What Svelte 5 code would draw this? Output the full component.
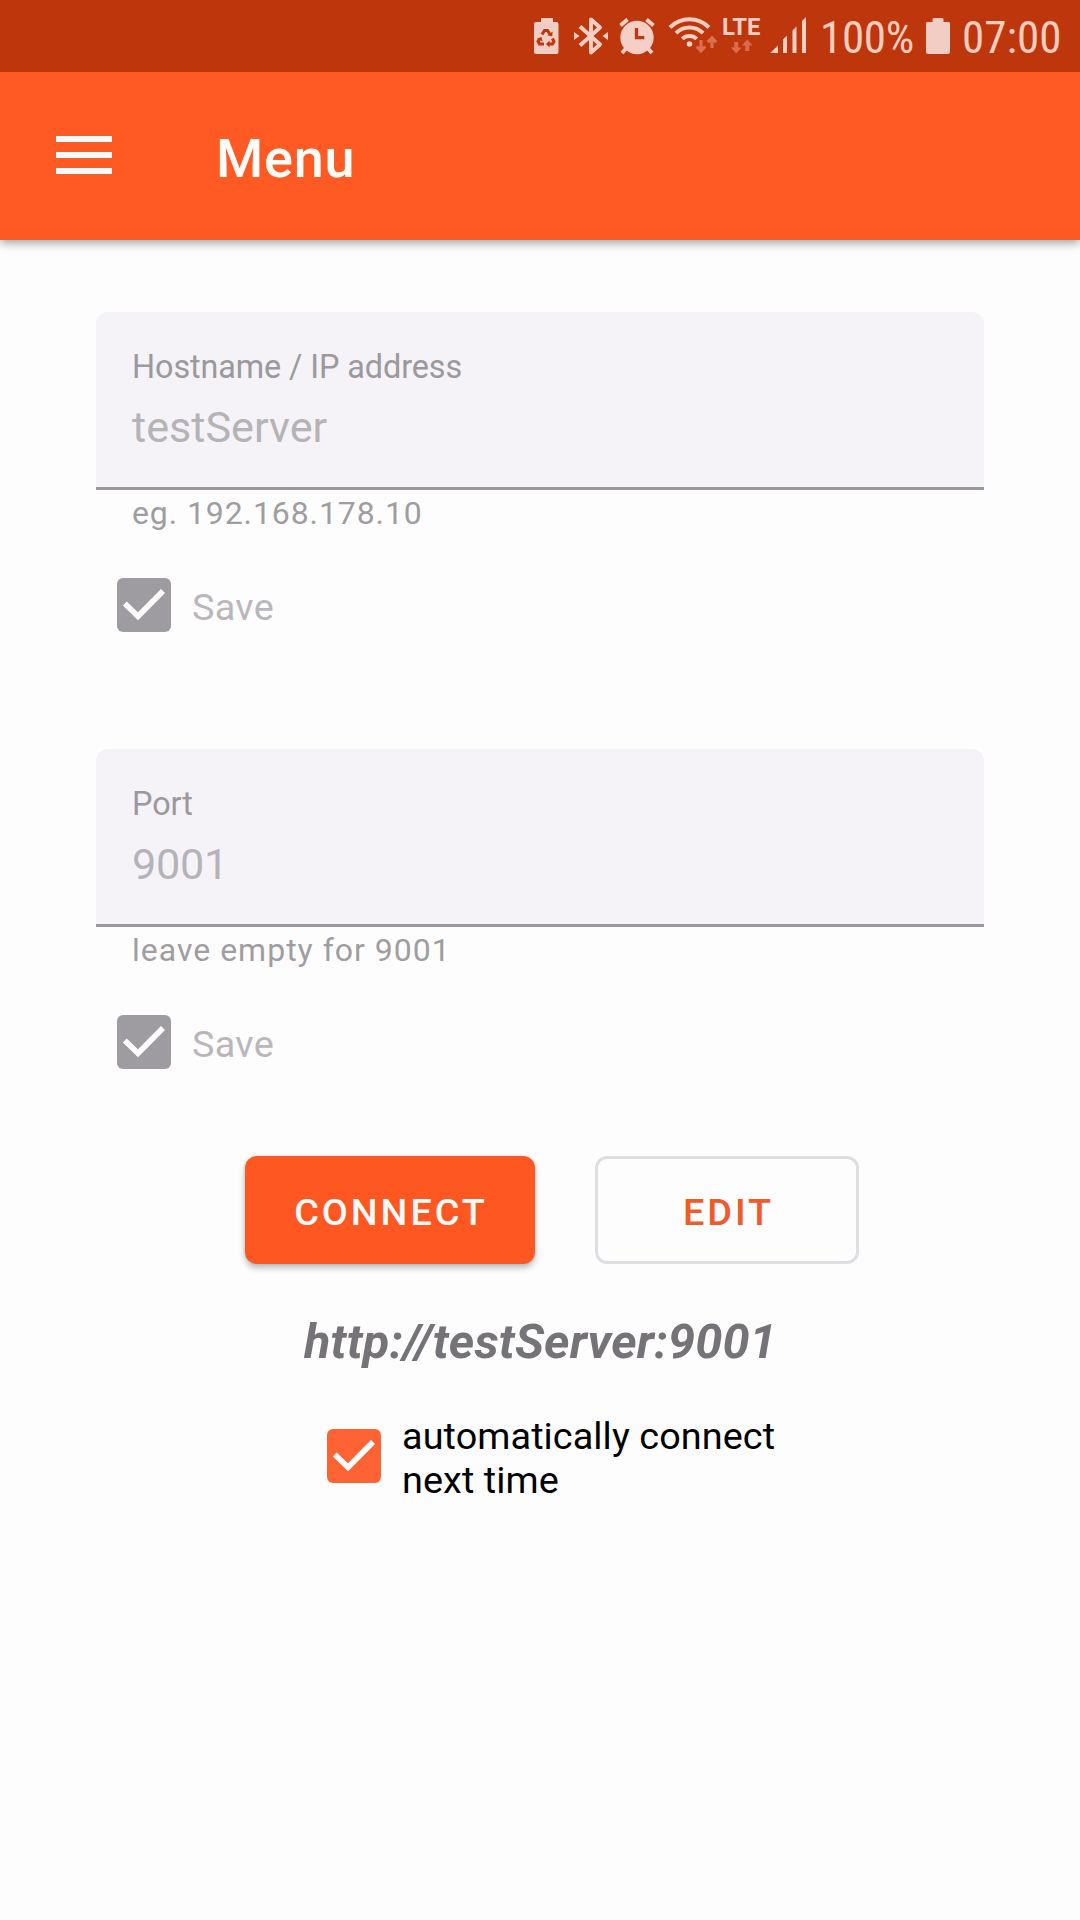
<script>
  let fields = $state([
    { id: 'host', label: 'Hostname / IP address', value: 'testServer', hint: 'eg. 192.168.178.10' },
    { id: 'port', label: 'Port', value: '9001', hint: 'leave empty for 9001' }
  ]);
</script>

{#snippet tick()}
  <svg class="tick" viewBox="0 0 54 54"><path d="M7.800 25.500 21 38.300 46 13" fill="none" stroke="#fff" stroke-width="5.600" /></svg>
{/snippet}

<div class="screen">
  <div class="status">
    <!-- battery saver -->
    <svg width="38" height="72" viewBox="530 0 38 72">
      <path d="M541 18h12v4h3.500a2 2 0 0 1 2 2v28a2 2 0 0 1-2 2h-20.500a2 2 0 0 1-2-2v-28a2 2 0 0 1 2-2h5z" fill="#f2cdc4" />
      <g fill="none" stroke="#bd360c" stroke-width="3">
        <path d="M542 34.500l2.500-4h3l2.500 4" />
        <path d="M552.300 38.500l1.700 3-1.500 2.500h-3.500" />
        <path d="M544 44h-4.500l-1.500-2.500 1.500-2.800" />
      </g>
      <path d="M547.500 35.500l4.800.8.300-4.800zM549.500 40.500v7l-3.500-3.500zM537 38.500l4.500-1.500 1.200 4.500z" fill="#bd360c" />
    </svg>
    <!-- bluetooth -->
    <svg width="46" height="72" viewBox="568 0 46 72">
      <path d="M580 26.500L600 44.500 591 52.500V19.500L600 27.500 580 45.500" fill="none" stroke="#f9cfc4" stroke-width="3.900" stroke-linejoin="round" />
      <path d="M574 32l5.500 4-5.500 4zM608 32l-5.500 4 5.500 4z" fill="#f9cfc4" />
    </svg>
    <!-- alarm -->
    <svg width="48" height="72" viewBox="614 0 48 72">
      <circle cx="637" cy="37.500" r="16.700" fill="#f5cfc6" />
      <path d="M620.500 25.500l7-6M653.500 25.500l-7-6M626 48.500l-4 4.500M648 48.500l4 4.500" stroke="#f5cfc6" stroke-width="3.900" fill="none" />
      <path d="M636.500 28v9.700h7.800" stroke="#bd360c" stroke-width="3.300" fill="none" />
    </svg>
    <!-- wifi -->
    <svg width="58" height="72" viewBox="662 0 58 72">
      <g fill="none" stroke="#f9cfc4" stroke-width="3.900">
        <path d="M670 27.300a27.500 27.500 0 0 1 39 0" />
        <path d="M676 33.200a19 19 0 0 1 27 0" />
        <path d="M682.300 38.800a10.500 10.500 0 0 1 14.400 0" />
      </g>
      <circle cx="689.500" cy="44" r="2.800" fill="#f9cfc4" />
      <path d="M701 40v11M696.800 46.500l4.200 4.500 4.200-4.500M712 48V38M707.800 42.200l4.200-4.400 4.200 4.400" fill="none" stroke="#da7050" stroke-width="3.200" />
    </svg>
    <!-- LTE -->
    <svg width="46" height="72" viewBox="720 0 46 72">
      <text class="lte" x="722" y="35" textLength="38.500" lengthAdjust="spacingAndGlyphs">LTE</text>
      <path d="M734.200 42h4v5.500h3.300l-5.300 6-5.300-6h3.300zM745.200 51h4v-5.500h3.300l-5.300-6-5.300 6h3.300z" fill="#da6c4d" />
    </svg>
    <!-- signal -->
    <svg width="54" height="72" viewBox="766 0 54 72">
      <path d="M770 53l8-7.500v7.500zM783 53V39.500l4-4V53zM792.500 53V30.500l4-4V53zM802 53V21l4-4V53z" fill="#f9cfc4" />
    </svg>
    <span class="percent">100%</span>
    <!-- battery -->
    <svg width="44" height="72" viewBox="918 0 44 72">
      <path d="M934 18h8a1.500 1.500 0 0 1 1.500 1.500v2.500h5a1.500 1.500 0 0 1 1.500 1.500v28.500a2 2 0 0 1-2 2h-20a2 2 0 0 1-2-2v-28.500a1.500 1.500 0 0 1 1.500-1.500h5v-2.500a1.500 1.500 0 0 1 1.500-1.500z" fill="#f2cdc4" />
    </svg>
    <span class="clock">07:00</span>
  </div>

  <header>
    <div class="burger"><i></i><i></i><i></i></div>
    <h1>Menu</h1>
  </header>

  <main>
    {#each fields as f (f.id)}
      <section class="field {f.id}">
        <div class="box">
          <div class="label">{f.label}</div>
          <div class="value">{f.value}</div>
        </div>
        <div class="hint">{f.hint}</div>
        <div class="save"><span class="check">{@render tick()}</span><span class="text">Save</span></div>
      </section>
    {/each}

    <div class="buttons">
      <button class="connect">CONNECT</button>
      <button class="edit">EDIT</button>
    </div>
    <div class="url">http://testServer:9001</div>
    <div class="auto">
      <span class="check on">{@render tick()}</span>
      <span class="text">automatically connect<br />next time</span>
    </div>
  </main>
</div>

<style>
  :global(body) { background: #fefdfe; }
  .screen {
    width: 1080px;
    height: 1920px;
    overflow: hidden;
    background: #fefdfe;
    font-family: Roboto, sans-serif;
  }
  svg { display: block; flex: none; }

  .status {
    position: relative;
    z-index: 1;
    display: flex;
    height: 72px;
    padding-left: 530px;
    background: #bd360c;
    color: #ffcdbd;
    font: 45px/72px 'Roboto Condensed', Roboto, sans-serif;
  }
  .status span { display: block; padding-top: 2px; height: 70px; white-space: nowrap; }
  .percent { width: 98px; letter-spacing: -0.3px; }
  .clock { width: 118px; }
  .lte { font: 700 23px Roboto, sans-serif; fill: #f9cfc4; }

  header {
    position: relative;
    display: flex;
    align-items: flex-start;
    height: 168px;
    background: #ff5a23;
    box-shadow: 0 3px 9px rgba(0, 12, 6, 0.38);
  }
  .burger {
    display: flex;
    flex-direction: column;
    gap: 10px;
    width: 56px;
    margin: 64px 104px 0 56px;
  }
  .burger i { height: 6px; background: #fffafa; }
  h1 {
    margin: 54px 0 0;
    color: #fffdfa;
    font-size: 54px;
    line-height: 65px;
    font-weight: 550;
    letter-spacing: 0.8px;
  }

  main { padding: 72px 96px 0; }
  .field { height: 437px; }
  .box {
    box-sizing: border-box;
    height: 178px;
    padding: 35px 36px 0;
    background: #f5f3f7;
    border-bottom: 3px solid #9a989b;
    border-radius: 12px 12px 0 0;
  }
  .label {
    color: #9b999c;
    font-size: 32.4px;
    line-height: 40px;
    letter-spacing: -0.1px;
  }
  .value {
    margin-top: 13px;
    color: #b5b3b7;
    font-size: 43.2px;
    line-height: 55px;
  }
  .port .value { letter-spacing: -0.3px; }
  .hint {
    padding: 3px 36px 0;
    color: #9f9da0;
    font-size: 32px;
    line-height: 40px;
    letter-spacing: 0.9px;
  }
  .port .hint { letter-spacing: 1px; }
  .save {
    display: flex;
    align-items: flex-start;
    gap: 21px;
    height: 54px;
    padding: 45px 0 0 21px;
    color: #b9b7bb;
    font-size: 37.8px;
    line-height: 54px;
    letter-spacing: 0.3px;
  }
  .save .text { padding-top: 2px; }
  .check {
    flex: none;
    width: 54px;
    height: 54px;
    border-radius: 6px;
    background: #9e9ca0;
  }
  .check.on { background: #ff6333; }
  .tick { width: 54px; height: 54px; }

  .buttons {
    display: flex;
    gap: 60px;
    margin: -30px 0 0 149px;
  }
  button {
    box-sizing: border-box;
    height: 108px;
    padding: 4px 0 0 2px;
    border: 0;
    border-radius: 12px;
    font: 500 37.8px/44px Roboto, sans-serif;
    letter-spacing: 2.95px;
  }
  .connect {
    width: 290px;
    background: #ff5722;
    color: #fffaf5;
    box-shadow: 0 4px 6px rgba(0, 0, 0, 0.25), 0 0 3px rgba(0, 0, 0, 0.12);
  }
  .edit {
    width: 264px;
    padding-left: 3px;
    border: 3px solid #e0dee2;
    background: transparent;
    color: #f15a29;
  }
  .url {
    margin: 48px 0 0 208px;
    color: #757377;
    font-size: 48.6px;
    line-height: 59px;
    font-weight: 700;
    font-style: italic;
    letter-spacing: 0.16px;
    white-space: nowrap;
  }
  .auto {
    display: flex;
    align-items: center;
    gap: 21px;
    margin: 39px 0 0 231px;
    color: #000;
    font-size: 37.8px;
    line-height: 44px;
    letter-spacing: 0.08px;
    white-space: nowrap;
  }
  .auto .text { padding-top: 4px; }
</style>
